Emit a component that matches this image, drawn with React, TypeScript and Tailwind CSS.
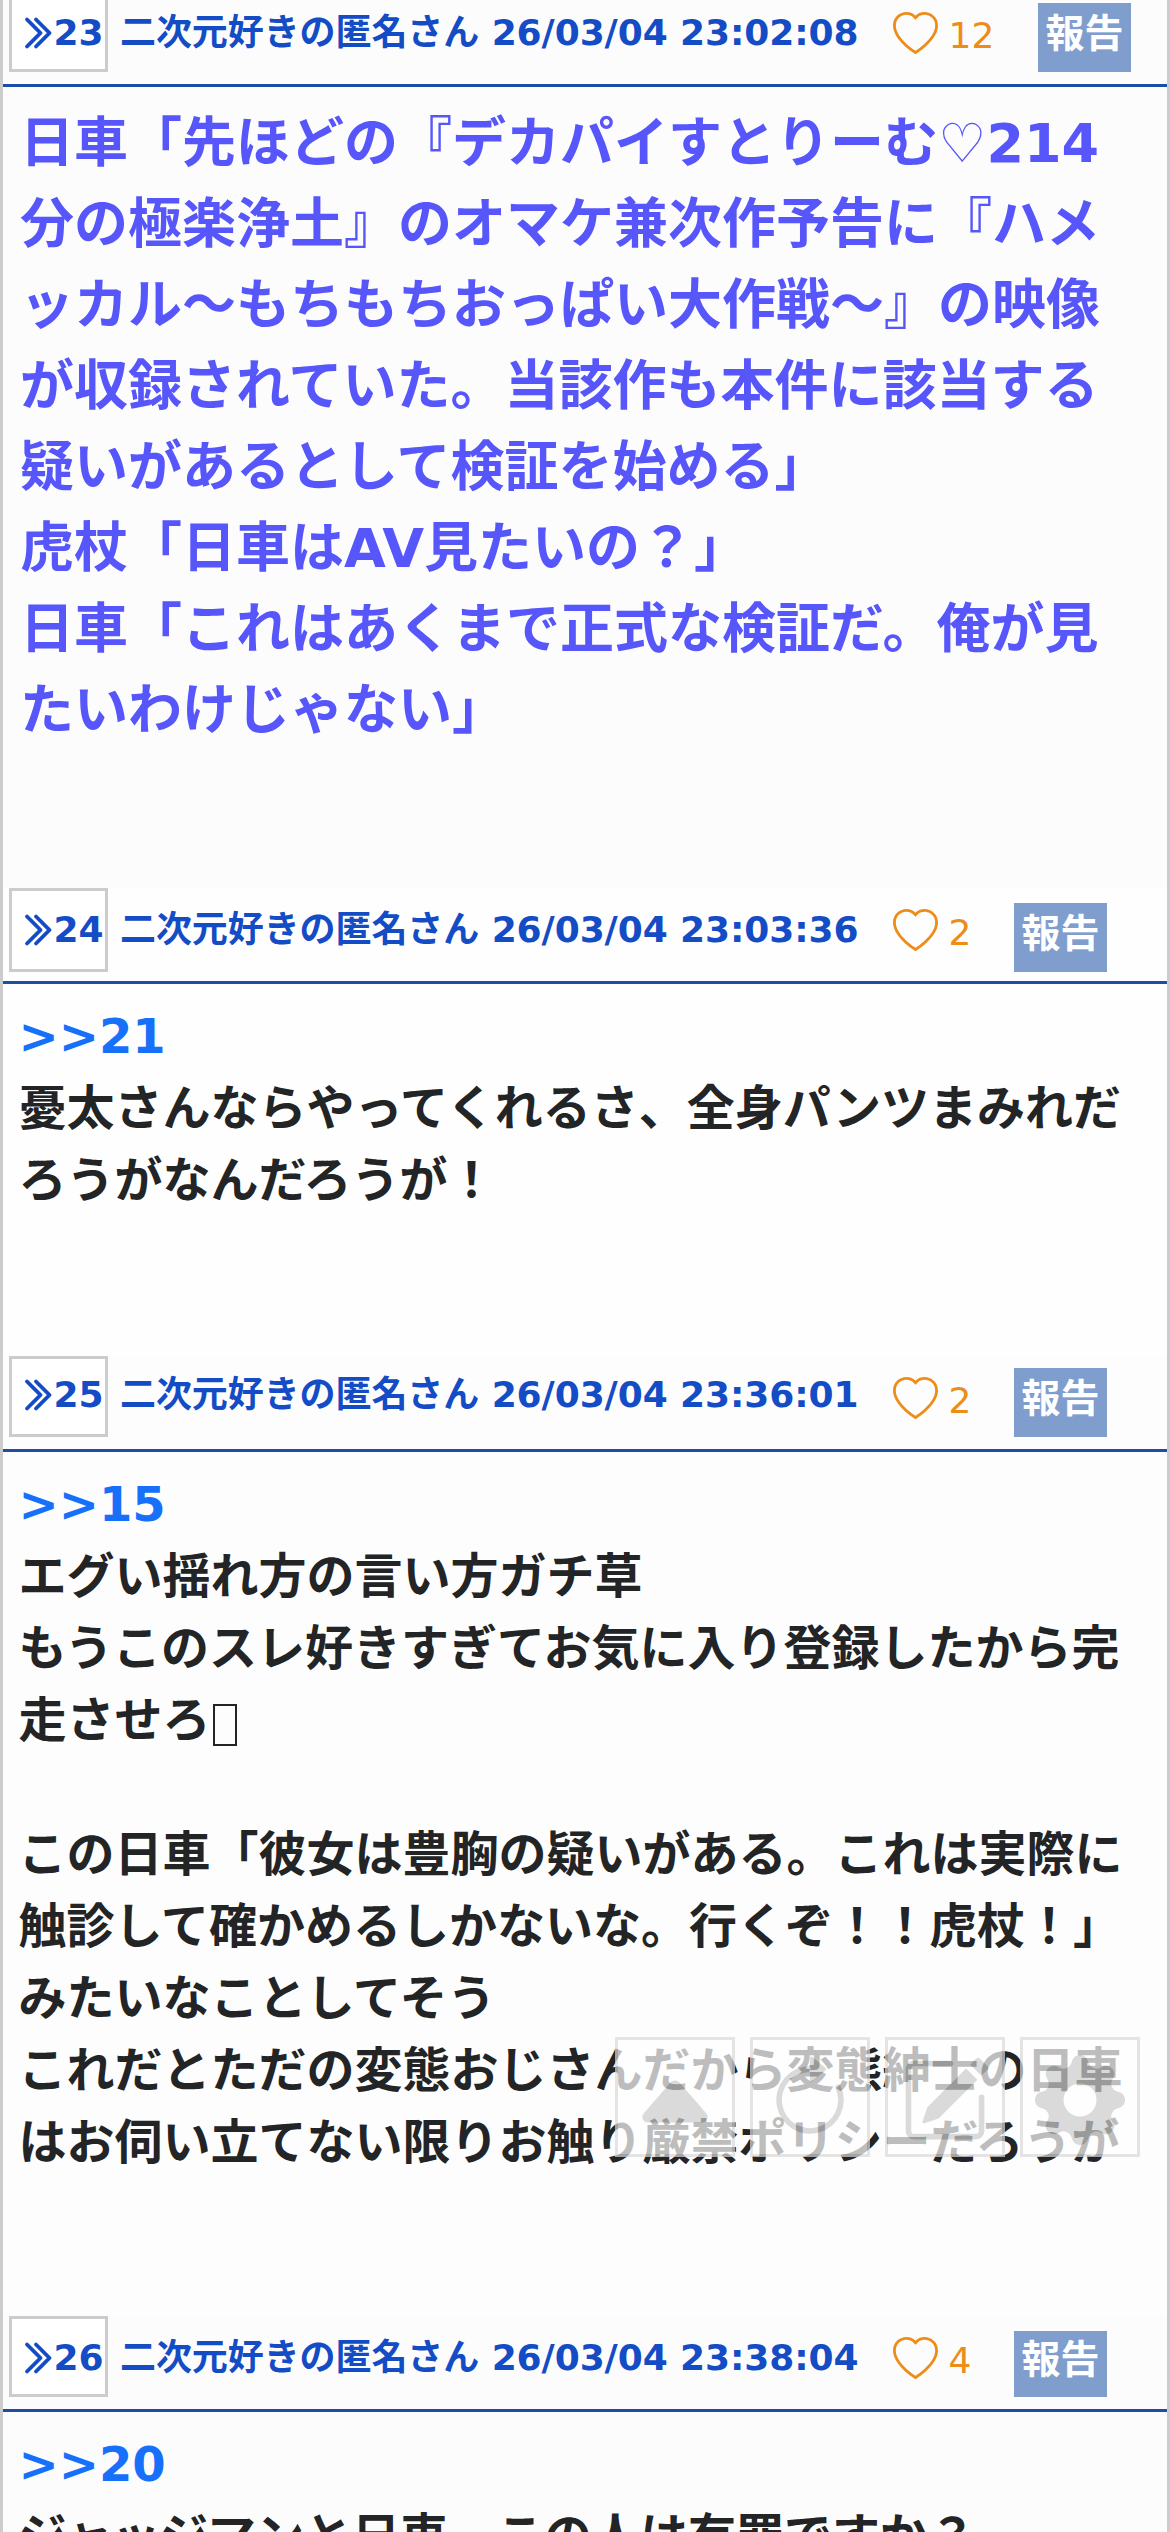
import React from "react";
import {
  BsArrowClockwise,
  BsCaretUpFill,
  BsChevronDoubleRight,
  BsGearFill,
  BsHeart,
  BsPencilSquare,
} from "react-icons/bs";

type Post = {
  id: number;
  time: string;
  likes: number;
  header: string;
  box: string;
  name: string;
  like: string;
  button: string;
  body: React.ReactNode;
  className: string;
};

const posts: Post[] = [
  {
    id: 23, time: "23:02:08", likes: 12,
    className: "h-[900px] -mt-3 bg-[#fcfcfc]",
    header: "h-[99px]", box: "h-[84px] pt-6", name: "mt-[27px]", like: "mt-6", button: "mr-[36px] mt-[15px] h-[69px] leading-[62px]",
    body: (
      <div className="pt-4 pl-[1.5px] text-[54px] leading-[81px] text-[#5656fa]">
        日車「先ほどの『デカパイすとりーむ♡214<br />分の極楽浄土』のオマケ兼次作予告に『ハメ<br />ッカル～もちもちおっぱい大作戦～』の映像<br />が収録されていた。当該作も本件に該当する<br />疑いがあるとして検証を始める」<br />虎杖「日車はAV見たいの？」<br />日車「これはあくまで正式な検証だ。俺が見<br />たいわけじゃない」
      </div>
    ),
  },
  {
    id: 24, time: "23:03:36", likes: 2,
    className: "h-[468px] bg-[#fefefe]",
    header: "h-[96px]", box: "h-[84px] pt-[21px]", name: "mt-6", like: "mt-[21px]", button: "mr-[60px] mt-[15px] h-[69px] leading-[62px]",
    body: (
      <div className="pt-4">
        <p className="text-[#1670fa]">&gt;&gt;21</p>
        <p>憂太さんならやってくれるさ、全身パンツまみれだ<br />ろうがなんだろうが！</p>
      </div>
    ),
  },
  {
    id: 25, time: "23:36:01", likes: 2,
    className: "h-[960px] bg-[#fdfdfd]",
    header: "h-[96px]", box: "h-[81px] pt-[18px]", name: "mt-[21px]", like: "mt-[21px]", button: "mr-[60px] mt-3 h-[69px] leading-[62px]",
    body: (
      <div className="pt-4">
        <p className="text-[#1670fa]">&gt;&gt;15</p>
        <p>エグい揺れ方の言い方ガチ草<br />もうこのスレ好きすぎてお気に入り登録したから完<br />走させろ<span className="ml-0.5 inline-block h-[42px] w-6 border-[2.5px] border-[#222425] align-[-9px]" /></p>
        <p className="mt-[62px]">この日車「彼女は豊胸の疑いがある。これは実際に<br />触診して確かめるしかないな。行くぞ！！虎杖！」<br />みたいなことしてそう<br />これだとただの変態おじさんだから変態紳士の日車<br />はお伺い立てない限りお触り厳禁ポリシーだろうが</p>
      </div>
    ),
  },
  {
    id: 26, time: "23:38:04", likes: 4,
    className: "h-[300px] bg-[#fcfcfc]",
    header: "h-[96px]", box: "h-[81px] pt-[21px]", name: "mt-6", like: "mt-[21px]", button: "mr-[60px] mt-[15px] h-[66px] leading-[57px]",
    body: (
      <div className="pt-4">
        <p className="text-[#1670fa]">&gt;&gt;20</p>
        <p>ジャッジマンと日車、この人は有罪ですか？</p>
      </div>
    ),
  },
];

function PostView({ post }: { post: Post }) {
  return (
    <article className={post.className}>
      <header className={`flex items-start border-b-[3px] border-[#1c4ea5] pl-1.5 text-[36px] leading-9 text-[#134cc5] ${post.header}`}>
        <div className={`flex w-[99px] shrink-0 items-start border-[3px] border-[#ccc] bg-white pl-[5.5px] font-bold ${post.box}`}>
          <BsChevronDoubleRight className="size-9 shrink-0" strokeWidth={0.7} />
          <span>{post.id}</span>
        </div>
        <span className={`ml-3 w-[739px] shrink-0 font-bold tracking-[-0.08px] whitespace-nowrap ${post.name}`}>二次元好きの匿名さん 26/03/04 {post.time}</span>
        <span className={`ml-[33.5px] flex shrink-0 gap-[11px] text-[#ee8c18] ${post.like}`}>
          <BsHeart className="size-[45px]" />
          <span className="mt-[5.5px]">{post.likes}</span>
        </span>
        <button className={`ml-auto flex w-[93px] shrink-0 items-start justify-center bg-[#809ecd] text-[39px] font-bold text-white ${post.button}`}>報告</button>
      </header>
      <div className="pl-[15.5px] text-[48px] leading-[72px] font-bold whitespace-nowrap text-[#222425]">{post.body}</div>
    </article>
  );
}

const tools = [
  { label: "上へ", Icon: BsCaretUpFill },
  { label: "更新", Icon: BsArrowClockwise },
  { label: "書き込む", Icon: BsPencilSquare },
  { label: "設定", Icon: BsGearFill },
];

export default function App() {
  return (
    <main lang="ja" className="relative h-[2532px] w-[1170px] overflow-hidden border-x-[3px] border-[#ccc] bg-[#fcfcfc] font-['DejaVu_Sans','Noto_Sans_CJK_JP',sans-serif]">
      {posts.map((p) => <PostView key={p.id} post={p} />)}
      <nav className="absolute top-[2037px] right-[27px] flex gap-[15px] opacity-70">
        {tools.map(({ label, Icon }) => (
          <button key={label} aria-label={label} className="flex size-[120px] items-start justify-center border-[3px] border-[#dadada] bg-white pt-[15px] text-[#ccc]">
            <Icon className="size-[90px]" />
          </button>
        ))}
      </nav>
    </main>
  );
}
